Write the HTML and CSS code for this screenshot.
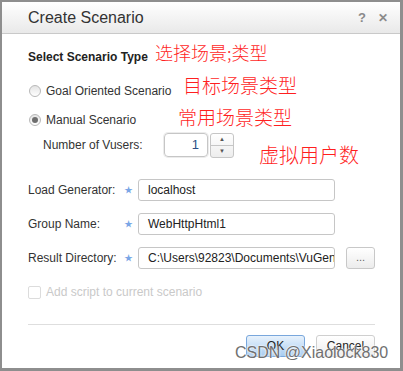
FILE: index.html
```html
<!DOCTYPE html>
<html lang="zh">
<head>
  <meta charset="UTF-8" />
  <title>Create Scenario</title>
  <link rel="stylesheet" href="styles.css">
</head>
<body>
  <div class="dialog">
    <!-- 标题栏 -->
    <div class="titlebar">
      <span class="title">Create Scenario</span>
      <span class="tb-btn">?</span>
      <span class="tb-btn close">✕</span>
    </div>

    <div class="content">
      <div class="section-title">Select Scenario Type</div>

      <label class="radio-row first">
        <span class="radio"></span>
        <span>Goal Oriented Scenario</span>
      </label>
      <label class="radio-row">
        <span class="radio checked"></span>
        <span>Manual Scenario</span>
      </label>

      <div class="vusers-row">
        <span class="vusers-label">Number of Vusers:</span>
        <span class="spin-input">1</span>
        <span class="spin-btns">
          <span class="spin-up">▲</span>
          <span class="spin-down">▼</span>
        </span>
      </div>

      <div class="form-row first">
        <span class="form-label">Load Generator:</span>
        <span class="star">★</span>
        <span class="text-input">localhost</span>
      </div>
      <div class="form-row">
        <span class="form-label">Group Name:</span>
        <span class="star">★</span>
        <span class="text-input">WebHttpHtml1</span>
      </div>
      <div class="form-row">
        <span class="form-label">Result Directory:</span>
        <span class="star">★</span>
        <span class="text-input">C:\Users\92823\Documents\VuGen\Results</span>
        <span class="browse-btn">...</span>
      </div>

      <label class="check-row">
        <span class="checkbox"></span>
        <span>Add script to current scenario</span>
      </label>

      <div class="separator"></div>

      <div class="buttons">
        <span class="btn ok">OK</span>
        <span class="btn">Cancel</span>
      </div>
    </div>

    <!-- 红色标注 -->
    <span class="note note-type">选择场景;类型</span>
    <span class="note note-goal">目标场景类型</span>
    <span class="note note-manual">常用场景类型</span>
    <span class="note note-vusers">虚拟用户数</span>

    <span class="watermark">CSDN @Xiaolock830</span>
  </div>
</body>
</html>
```

FILE: styles.css
```css
body {
  margin: 0;
  font-family: "Liberation Sans", Arial, sans-serif;
  font-size: 12px;
  color: #333;
  background: #fff;
}

/* 전체 창 */
.dialog {
  position: relative;
  width: 403px;
  height: 371px;
  box-sizing: border-box;
  border: 2px solid #8e8e8e;
  border-right-width: 3px;
  border-bottom-width: 3px;
  background: #fff;
  overflow: hidden;
}

/* 标题栏 */
.titlebar {
  display: flex;
  align-items: center;
  height: 31px;
  padding: 0 12px 0 26px;
  background: linear-gradient(#ffffff, #e9e9e9);
  border-bottom: 1px solid #c9c9c9;
}

.title {
  flex: 1;
  font-size: 16px;
  color: #333;
}

.tb-btn {
  color: #8a8a8a;
  font-size: 13px;
  font-weight: bold;
  margin-left: 12px;
}

.tb-btn.close {
  font-size: 12px;
}

.content {
  padding: 0 25px 0 26px;
}

.section-title {
  margin-top: 15px;
  height: 16px;
  line-height: 16px;
  font-weight: bold;
  color: #222;
}

/* 单选 */
.radio-row {
  display: flex;
  align-items: center;
  height: 20px;
  margin-top: 9px;
  padding-left: 1px;
}

.radio-row.first {
  margin-top: 16px;
}

.radio {
  width: 10px;
  height: 10px;
  border: 1px solid #b8b8b8;
  border-radius: 50%;
  background: linear-gradient(#e4e4e4, #ffffff);
  margin-right: 5px;
  display: flex;
  align-items: center;
  justify-content: center;
}

.radio.checked::after {
  content: "";
  width: 6px;
  height: 6px;
  border-radius: 50%;
  background: #6e6e6e;
}

/* 数量 */
.vusers-row {
  display: flex;
  align-items: center;
  height: 24px;
  margin-top: 3px;
  padding-left: 15px;
}

.vusers-label {
  width: 121px;
}

.spin-input {
  width: 34px;
  height: 22px;
  line-height: 22px;
  border: 1px solid #c6c6c6;
  border-radius: 4px;
  text-align: right;
  padding-right: 8px;
  font-size: 13px;
  color: #2d4f86;
  box-shadow: 0 0 0 1px #ececec;
}

.spin-btns {
  display: flex;
  flex-direction: column;
  margin-left: 2px;
  width: 22px;
  height: 23px;
  border: 1px solid #c6c6c6;
  border-radius: 3px;
  background: linear-gradient(#ffffff, #ededed);
}

.spin-up,
.spin-down {
  flex: 1;
  font-size: 6px;
  color: #555;
  text-align: center;
  line-height: 11px;
}

.spin-up {
  border-bottom: 1px solid #c6c6c6;
}

/* 表单 */
.form-row {
  display: flex;
  align-items: center;
  height: 22px;
  margin-top: 12px;
}

.form-row.first {
  margin-top: 22px;
}

.form-label {
  width: 96px;
}

.star {
  width: 14px;
  font-size: 9px;
  color: #7aa6e6;
}

.text-input {
  width: 186px;
  height: 20px;
  line-height: 20px;
  padding-left: 9px;
  border: 1px solid #c6c6c6;
  border-radius: 3px;
  white-space: nowrap;
  overflow: hidden;
  font-size: 12px;
  color: #222;
}

.browse-btn {
  margin-left: 11px;
  width: 27px;
  height: 20px;
  line-height: 18px;
  text-align: center;
  border: 1px solid #c8c8c8;
  border-radius: 3px;
  background: linear-gradient(#ffffff, #ececec);
  font-size: 11px;
  color: #666;
}

/* 复选 */
.check-row {
  display: flex;
  align-items: center;
  height: 14px;
  margin-top: 16px;
  color: #c9c9c9;
}

.checkbox {
  width: 11px;
  height: 11px;
  border: 1px solid #dcdcdc;
  border-radius: 2px;
  margin-right: 5px;
}

.separator {
  margin-top: 25px;
  height: 1px;
  background: #dedede;
}

.buttons {
  display: flex;
  justify-content: flex-end;
  gap: 11px;
  margin-top: 10px;
}

.btn {
  width: 57px;
  height: 20px;
  line-height: 20px;
  text-align: center;
  border: 1px solid #cfcfcf;
  border-radius: 3px;
  background: linear-gradient(#ffffff, #ececec);
  font-size: 12px;
  color: #222;
}

.btn.ok {
  border-color: #79a7dc;
  background: linear-gradient(#e8f2fc, #a9cdf1);
}

/* 标注 */
.note {
  position: absolute;
  color: #ff1f1f;
  font-family: "Noto Sans CJK SC", sans-serif;
  font-weight: 300;
  line-height: 1;
  white-space: nowrap;
}

.note-type {
  left: 153px;
  top: 41px;
  font-size: 18px;
}

.note-goal {
  left: 181px;
  top: 73px;
  font-size: 19px;
}

.note-manual {
  left: 176px;
  top: 105px;
  font-size: 19px;
}

.note-vusers {
  left: 257px;
  top: 143px;
  font-size: 20px;
}

.watermark {
  position: absolute;
  left: 233px;
  top: 342px;
  font-size: 16px;
  color: #707070;
  text-shadow: 0 0 2px #fff, 0 0 2px #fff;
  white-space: nowrap;
}
```
